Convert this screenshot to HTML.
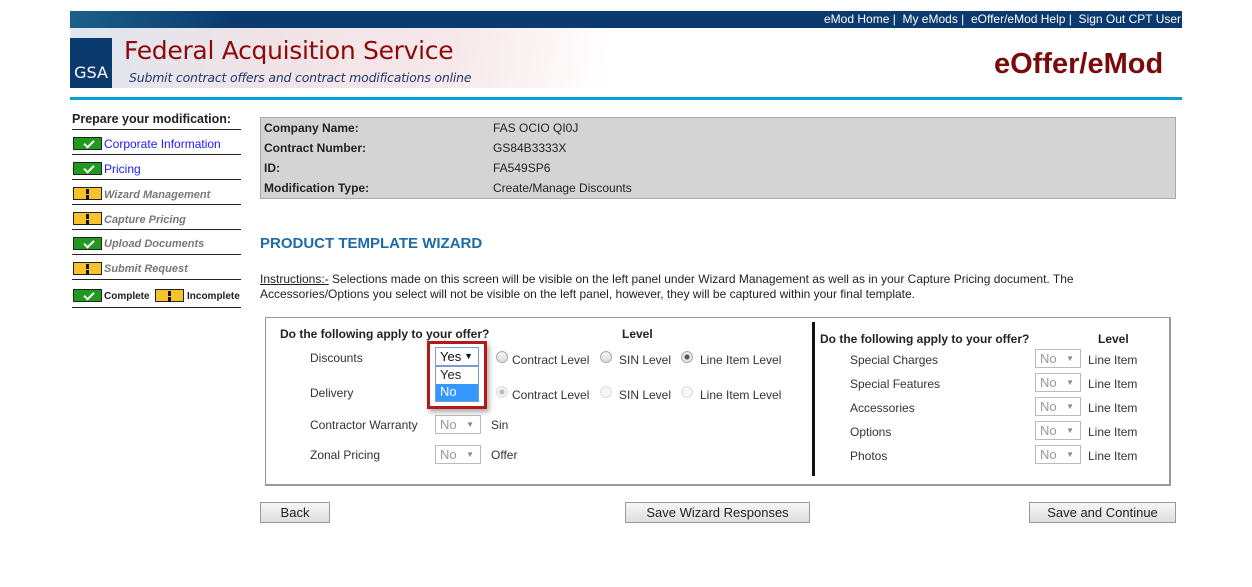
<!DOCTYPE html>
<html><head><style>
*{margin:0;padding:0;box-sizing:border-box}
body{width:1252px;height:587px;background:#fff;font-family:"Liberation Sans",Arial,sans-serif;position:relative;overflow:hidden;color:#222}
.a{position:absolute;white-space:nowrap}
.s12{font-size:12px}
.b{font-weight:bold}
.ic{position:absolute;width:29px;height:13px;border:1px solid #222}
.ok{background:#1f9a1f}
.ok:after{content:"";position:absolute;left:12px;top:0px;width:4px;height:8px;border:solid #fff;border-width:0 2px 2px 0;transform:rotate(45deg)}
.wr{background:#f8c22a}
.wr:after{content:"";position:absolute;left:12px;top:1px;width:3px;height:5px;background:#111;box-shadow:0 6px 0 0 #111}
.wr:before{content:"";position:absolute;left:12px;top:9px;width:3px;height:2px;background:#111}
.hr{position:absolute;left:72px;width:169px;height:1px;background:#222}
.lk{font-size:12px;color:#1a1aff}
.gi{font-size:11px;color:#777;font-style:italic;font-weight:bold}
.sel{position:absolute;width:46px;height:19px;border:1px solid #bbb;background:#fff;color:#999;font-size:13px;padding:1px 0 0 4px}
.sel:after{content:"▼";position:absolute;right:6px;top:4px;font-size:8px;color:#888}
.rad{position:absolute;width:12px;height:12px;border-radius:50%;border:1px solid #aaa;background:linear-gradient(#f4f4f4,#ddd)}
.btn{position:absolute;height:21px;border:1px solid #999;background:linear-gradient(#f6f6f6,#dedede);font-size:13px;text-align:center;line-height:19px;color:#222}
.lab{font-size:12px;color:#333}
</style></head><body>
<div class="a" style="left:70px;top:11px;width:1112px;height:17px;background:linear-gradient(90deg,#1a5f8a 0,#0b3a6e 15%,#0b3a6e 100%)"></div>
<div class="a" style="left:824px;top:12px;font-size:12px;color:#fff">eMod Home |&nbsp; My eMods |&nbsp; eOffer/eMod Help |&nbsp; Sign Out CPT User</div>
<div class="a" style="left:70px;top:28px;width:540px;height:60px;background:linear-gradient(100deg,#dfe6ee 0,#f1e3e6 40%,#f6e8ea 70%,#fff 100%)"></div>
<div class="a" style="left:70px;top:38px;width:42px;height:50px;background:#0b3a6e;color:#fff;font-size:16px;padding-top:25px;text-align:center;font-family:'DejaVu Sans',sans-serif">GSA</div>
<div class="a" style="left:124px;top:36px;font-size:25px;color:#8b0a0a;font-family:'DejaVu Sans',sans-serif;letter-spacing:-0.3px">Federal Acquisition Service</div>
<div class="a" style="left:129px;top:70px;font-size:12.5px;color:#1f3a6e;font-style:italic;font-family:'DejaVu Sans',sans-serif;letter-spacing:-0.2px">Submit contract offers and contract modifications online</div>
<div class="a" style="left:994px;top:48px;font-size:29px;font-weight:bold;color:#7b0a0a">eOffer/eMod</div>
<div class="a" style="left:70px;top:97px;width:1112px;height:3px;background:#0aa0d6"></div>
<div class="a b" style="left:72px;top:112px;font-size:12.5px">Prepare your modification:</div>
<div class="hr" style="top:129px"></div>
<div class="ic ok" style="left:73px;top:137px"></div><div class="a lk" style="left:104px;top:137px">Corporate Information</div>
<div class="hr" style="top:154px"></div>
<div class="ic ok" style="left:73px;top:162px"></div><div class="a lk" style="left:104px;top:162px">Pricing</div>
<div class="hr" style="top:179px"></div>
<div class="ic wr" style="left:73px;top:187px"></div><div class="a gi" style="left:104px;top:189px">Wizard Management</div>
<div class="hr" style="top:204px"></div>
<div class="ic wr" style="left:73px;top:212px"></div><div class="a gi" style="left:104px;top:214px">Capture Pricing</div>
<div class="hr" style="top:229px"></div>
<div class="ic ok" style="left:73px;top:237px"></div><div class="a gi" style="left:104px;top:238px">Upload Documents</div>
<div class="hr" style="top:254px"></div>
<div class="ic wr" style="left:73px;top:262px"></div><div class="a gi" style="left:104px;top:263px">Submit Request</div>
<div class="hr" style="top:279px"></div>
<div class="ic ok" style="left:73px;top:289px"></div><div class="a b" style="left:104px;top:291px;font-size:10px">Complete</div>
<div class="ic wr" style="left:155px;top:289px"></div><div class="a b" style="left:187px;top:291px;font-size:10px">Incomplete</div>
<div class="hr" style="top:307px"></div>
<div class="a" style="left:260px;top:117px;width:916px;height:82px;background:#d4d4d4;border:1px solid #aaa"></div>
<div class="a s12 b" style="left:264px;top:121px">Company Name:</div><div class="a s12" style="left:493px;top:121px">FAS OCIO QI0J</div>
<div class="a s12 b" style="left:264px;top:141px">Contract Number:</div><div class="a s12" style="left:493px;top:141px">GS84B3333X</div>
<div class="a s12 b" style="left:264px;top:161px">ID:</div><div class="a s12" style="left:493px;top:161px">FA549SP6</div>
<div class="a s12 b" style="left:264px;top:181px">Modification Type:</div><div class="a s12" style="left:493px;top:181px">Create/Manage Discounts</div>
<div class="a b" style="left:260px;top:235px;font-size:15px;color:#1f6aa8">PRODUCT TEMPLATE WIZARD</div>
<div class="a s12" style="left:260px;top:272px;line-height:15px;white-space:normal;width:880px"><u>Instructions:-</u> Selections made on this screen will be visible on the left panel under Wizard Management as well as in your Capture Pricing document. The Accessories/Options you select will not be visible on the left panel, however, they will be captured within your final template.</div>
<div class="a" style="left:265px;top:317px;width:906px;height:169px;border:1px solid #999;border-width:1px 2px 2px 1px"></div>
<div class="a" style="left:812px;top:322px;width:3px;height:154px;background:#111"></div>
<div class="a s12 b" style="left:280px;top:327px">Do the following apply to your offer?</div>
<div class="a s12 b" style="left:622px;top:327px">Level</div>
<div class="a lab" style="left:310px;top:351px">Discounts</div>
<div class="a lab" style="left:310px;top:386px">Delivery</div>
<div class="a lab" style="left:310px;top:418px">Contractor Warranty</div>
<div class="a lab" style="left:310px;top:448px">Zonal Pricing</div>
<div class="rad" style="left:496px;top:351px"></div><div class="a lab" style="left:512px;top:353px">Contract Level</div>
<div class="rad" style="left:600px;top:351px"></div><div class="a lab" style="left:619px;top:353px">SIN Level</div>
<div class="rad" style="left:681px;top:351px;background:radial-gradient(circle,#555 0 2px,#e8e8e8 3px)"></div><div class="a lab" style="left:700px;top:353px">Line Item Level</div>
<div class="rad" style="left:496px;top:386px;border-color:#ddd;background:radial-gradient(circle,#bbb 0 2px,#f3f3f3 3px)"></div><div class="a lab" style="left:512px;top:388px">Contract Level</div>
<div class="rad" style="left:600px;top:386px;border-color:#ddd;background:#f5f5f5"></div><div class="a lab" style="left:619px;top:388px">SIN Level</div>
<div class="rad" style="left:681px;top:386px;border-color:#ddd;background:#f5f5f5"></div><div class="a lab" style="left:700px;top:388px">Line Item Level</div>
<div class="sel" style="left:435px;top:415px">No</div><div class="a lab" style="left:491px;top:418px">Sin</div>
<div class="sel" style="left:435px;top:445px">No</div><div class="a lab" style="left:491px;top:448px">Offer</div>
<div class="a" style="left:427px;top:341px;width:60px;height:68px;border:3px solid #b21a1a;box-shadow:2px 3px 5px rgba(0,0,0,.35)"></div>
<div class="a" style="left:435px;top:347px;width:44px;height:19px;border:1px solid #7a9ad0;background:#fff;font-size:13px;padding:1px 0 0 4px;color:#111">Yes<span style="position:absolute;right:5px;top:3px;font-size:9px">▼</span></div>
<div class="a" style="left:435px;top:366px;width:44px;height:36px;border:1px solid #7a9ad0;background:#fff;font-size:13px"><div style="padding-left:4px;height:17px">Yes</div><div style="padding-left:4px;height:17px;background:#3399ff;color:#fff">No</div></div>
<div class="a s12 b" style="left:820px;top:332px">Do the following apply to your offer?</div>
<div class="a s12 b" style="left:1098px;top:332px">Level</div>
<div class="a lab" style="left:850px;top:353px">Special Charges</div><div class="sel" style="left:1035px;top:349px">No</div><div class="a lab" style="left:1088px;top:353px">Line Item</div>
<div class="a lab" style="left:850px;top:377px">Special Features</div><div class="sel" style="left:1035px;top:373px">No</div><div class="a lab" style="left:1088px;top:377px">Line Item</div>
<div class="a lab" style="left:850px;top:401px">Accessories</div><div class="sel" style="left:1035px;top:397px">No</div><div class="a lab" style="left:1088px;top:401px">Line Item</div>
<div class="a lab" style="left:850px;top:425px">Options</div><div class="sel" style="left:1035px;top:421px">No</div><div class="a lab" style="left:1088px;top:425px">Line Item</div>
<div class="a lab" style="left:850px;top:449px">Photos</div><div class="sel" style="left:1035px;top:445px">No</div><div class="a lab" style="left:1088px;top:449px">Line Item</div>
<div class="btn" style="left:260px;top:502px;width:70px">Back</div>
<div class="btn" style="left:625px;top:502px;width:185px">Save Wizard Responses</div>
<div class="btn" style="left:1029px;top:502px;width:147px">Save and Continue</div>
</body></html>
